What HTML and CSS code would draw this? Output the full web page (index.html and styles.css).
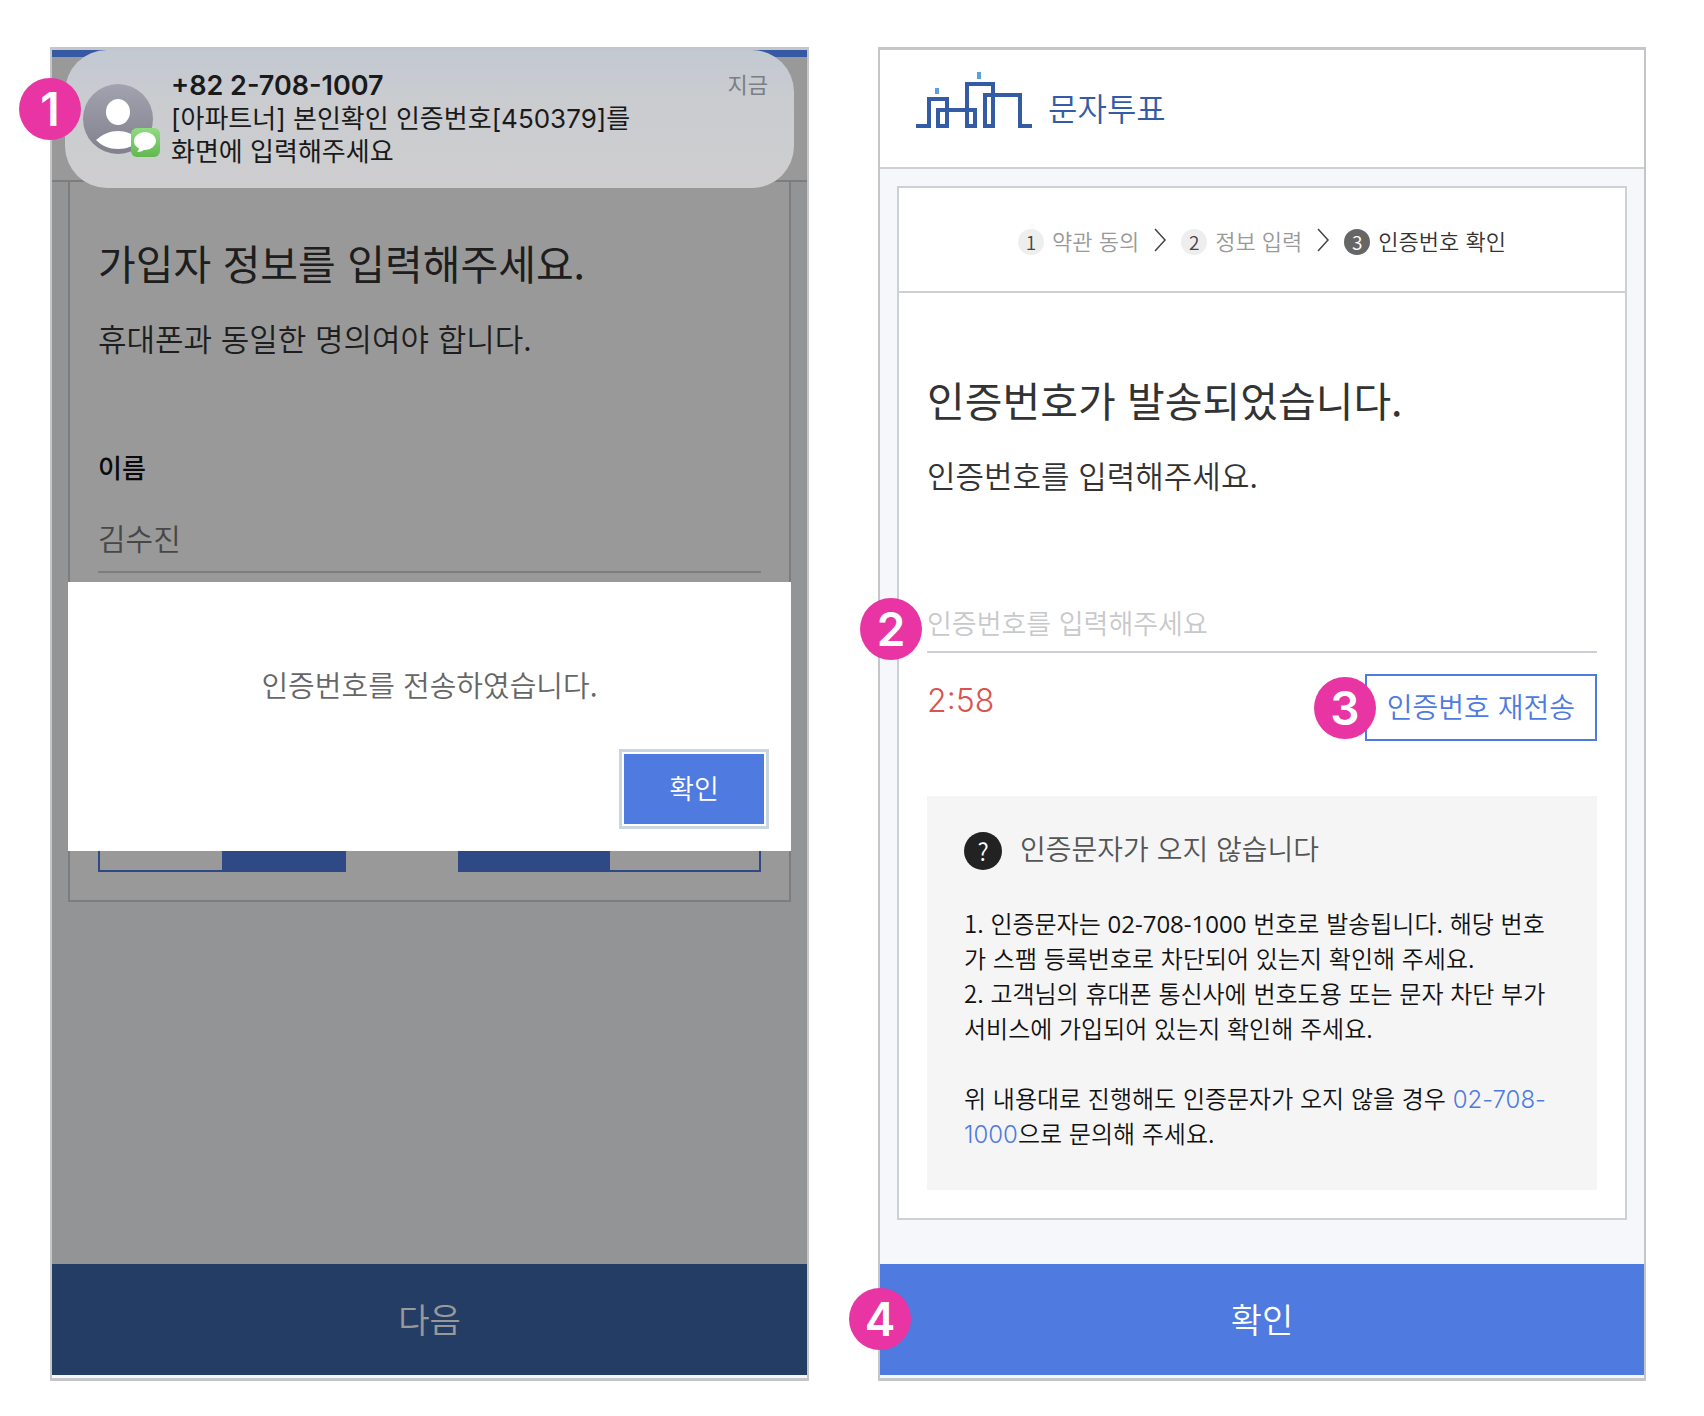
FILE: index.html
```html
<!DOCTYPE html>
<html lang="ko">

<head>
    <meta charset="utf-8">
    <meta name="viewport" content="width=device-width, initial-scale=1">
    <title>문자투표</title>
    <link rel="stylesheet" href="styles.css">
</head>

<body>
    <div class="guide">
        <section class="phone">
            <div class="status-bar"></div>
            <div class="header header-tall"></div>
            <div class="main main-info">
                <div class="card card-info">
                    <h1 class="title">가입자 정보를 입력해주세요.</h1>
                    <p class="subtitle">휴대폰과 동일한 명의여야 합니다.</p>
                    <label class="label" for="name">이름</label>
                    <input class="field field-name" type="text" id="name" value="김수진">
                    <div class="toggles">
                        <div class="toggle toggle-left"><i></i><i class="on"></i></div>
                        <div class="toggle toggle-right"><i class="on"></i><i></i></div>
                    </div>
                </div>
            </div>
            <button class="footer-button next" type="button">다음</button>

            <div class="overlay">
                <div class="modal" role="dialog">
                    <p class="modal-text">인증번호를 전송하였습니다.</p>
                    <button class="modal-button" type="button">확인</button>
                </div>
            </div>

            <div class="notification">
                <div class="avatar">
                    <svg viewBox="0 0 80 76" width="80" height="76">
                        <defs>
                            <linearGradient id="person" x1="0" y1="0" x2="0" y2="1">
                                <stop offset="0" stop-color="#a2a3b0" />
                                <stop offset="1" stop-color="#80818b" />
                            </linearGradient>
                            <linearGradient id="bubble" x1="0" y1="0" x2="0" y2="1">
                                <stop offset="0" stop-color="#8fdb82" />
                                <stop offset="1" stop-color="#62b850" />
                            </linearGradient>
                        </defs>
                        <circle cx="35" cy="35" r="35" fill="url(#person)" />
                        <ellipse cx="35" cy="28" rx="12" ry="13" fill="#fff" />
                        <path d="M13 56C20 50 27 47 35 47s15 3 22 9c-6 6-13 9-22 9s-16-3-22-9z" fill="#fff" />
                        <rect x="48" y="44" width="29" height="29" rx="6" fill="url(#bubble)" />
                        <ellipse cx="62" cy="57" rx="11" ry="9" fill="#fff" />
                        <path d="M56 63c0 3-1 4-2 5 4 0 6-1 8-3z" fill="#fff" />
                    </svg>
                </div>
                <div class="message">
                    <div class="message-top">
                        <strong>+82 2-708-1007</strong>
                        <span class="time">지금</span>
                    </div>
                    <p>[아파트너] 본인확인 인증번호[450379]를<br>화면에 입력해주세요</p>
                </div>
            </div>
            <span class="badge badge-1">1</span>
        </section>

        <section class="phone">
            <div class="header">
                <svg class="logo" viewBox="0 0 118 58" width="118" height="58">
                    <g fill="none" stroke="#345ca6" stroke-width="4">
                        <path d="M1 54H14V27H32V54H23V38H60V54H52V12H78V54H70V23H105V54H117" />
                    </g>
                    <path d="M20 16h4v6h-4zM62 0h4v7h-4z" fill="#5ba0dc" />
                </svg>
                <span class="brand">문자투표</span>
            </div>
            <div class="main">
                <div class="card">
                    <ol class="steps">
                        <li><span class="num">1</span>약관 동의</li>
                        <li class="arrow"><svg viewBox="0 0 14 24" width="14" height="24"><path d="M2 1l10 11L2 23" /></svg></li>
                        <li><span class="num">2</span>정보 입력</li>
                        <li class="arrow"><svg viewBox="0 0 14 24" width="14" height="24"><path d="M2 1l10 11L2 23" /></svg></li>
                        <li class="current"><span class="num">3</span>인증번호 확인</li>
                    </ol>
                    <div class="content">
                        <h1 class="title">인증번호가 발송되었습니다.</h1>
                        <p class="subtitle">인증번호를 입력해주세요.</p>
                        <div class="code">
                            <input class="field" type="text" aria-label="인증번호" placeholder="인증번호를 입력해주세요">
                            <span class="badge badge-2">2</span>
                        </div>
                        <div class="resend-row">
                            <span class="timer">2:58</span>
                            <div class="resend-box">
                                <button class="resend" type="button">인증번호 재전송</button>
                                <span class="badge badge-3">3</span>
                            </div>
                        </div>
                        <div class="help">
                            <h2 class="help-title"><span class="question">?</span>인증문자가 오지 않습니다</h2>
                            <p>1. 인증문자는 <span class="tel">02-708-1000</span> 번호로 발송됩니다. 해당 번호<br>가 스팸 등록번호로 차단되어 있는지 확인해 주세요.</p>
                            <p>2. 고객님의 휴대폰 통신사에 번호도용 또는 문자 차단 부가<br>서비스에 가입되어 있는지 확인해 주세요.</p>
                            <p class="contact">위 내용대로 진행해도 인증문자가 오지 않을 경우 <a href="tel:02-708-1000">02-708-<br>1000</a>으로 문의해 주세요.</p>
                        </div>
                    </div>
                </div>
            </div>
            <div class="footer">
                <button class="footer-button" type="button">확인</button>
                <span class="badge badge-4">4</span>
            </div>
        </section>
    </div>
</body>

</html>
```
FILE: styles.css
```css
* {
    box-sizing: border-box;
}

body {
    margin: 0;
    background: #fff;
    font-family: "Noto Sans CJK KR", sans-serif;
    font-weight: 350;
    color: #333;
}

h1,
h2,
p,
ol {
    margin: 0;
    padding: 0;
    font-weight: inherit;
}

button,
input {
    font: inherit;
    border: none;
    border-radius: 0;
    padding: 0;
}

.guide {
    display: grid;
    grid-template-columns: 759fr 768fr;
    gap: 69px;
    padding: 47px 58px 34px 50px;
}

.phone {
    position: relative;
    display: flex;
    flex-direction: column;
    border: solid #c4c6c9;
    border-width: 3px 2px;
    padding-bottom: 3px;
    background: #f5f7fb;
}

.header {
    display: flex;
    align-items: center;
    height: 119px;
    padding: 0 35px 4px;
    border-bottom: 2px solid #cdd0d4;
    background: #fff;
}

.header-tall {
    height: 132px;
}

.brand {
    margin-left: 15px;
    font-size: 32px;
    line-height: 40px;
    color: #345ca6;
}

.logo {
    margin-bottom: 12px;
}

.main {
    flex: 1;
    padding: 17px 17px 44px;
}

.card {
    border: 2px solid #cdd0d4;
    background: #fff;
}

.content {
    padding: 82px 28px 28px;
}

.title {
    font-size: 41px;
    line-height: 48px;
    font-weight: 400;
}

.subtitle {
    margin-top: 32px;
    font-size: 31px;
    line-height: 40px;
}

.field {
    display: block;
    width: 100%;
    height: 60px;
    border-bottom: 2px solid #cdd0d4;
    background: none;
    font-size: 27px;
    color: #777;
}

.field::placeholder {
    color: #c8c9ca;
    opacity: 1;
}

/* steps */
.steps {
    display: flex;
    justify-content: center;
    align-items: center;
    gap: 14px;
    height: 105px;
    border-bottom: 2px solid #cdd0d4;
    list-style: none;
    font-size: 22px;
    line-height: 32px;
    color: #999;
}

.steps li {
    display: flex;
    align-items: center;
    gap: 8px;
}

.num {
    width: 26px;
    height: 26px;
    margin-top: 4px;
    border-radius: 50%;
    background: #eee;
    color: #444;
    font-size: 19px;
    line-height: 26px;
    text-align: center;
}

.arrow path {
    fill: none;
    stroke: #444;
    stroke-width: 1.5;
}

.steps .current {
    color: #333;
}

.current .num {
    background: #666;
    color: #fff;
}

/* verification code */
.code {
    position: relative;
    margin-top: 98px;
}

.resend-row {
    display: flex;
    justify-content: space-between;
    margin-top: 21px;
}

.timer {
    font-family: Inter, sans-serif;
    font-size: 32px;
    line-height: 54px;
    color: #d9534f;
}

.resend-box {
    position: relative;
}

.resend {
    height: 67px;
    padding: 0 20px 4px;
    border: 2px solid #4f7adf;
    background: #fff;
    color: #4f7adf;
    font-size: 28px;
}

.help {
    margin-top: 55px;
    padding: 30px 37px 40px;
    background: #f5f5f5;
    color: #111;
    font-size: 24px;
    line-height: 35px;
}

.help-title {
    display: flex;
    align-items: center;
    gap: 18px;
    margin-bottom: 35px;
    font-size: 28px;
    line-height: 40px;
    color: #555;
}

.question {
    width: 38px;
    height: 38px;
    margin-top: 6px;
    border-radius: 50%;
    background: #222;
    color: #fff;
    font-size: 24px;
    line-height: 38px;
    text-align: center;
}

.tel {
    font-family: "Open Sans", sans-serif;
    font-weight: 400;
    line-height: 1;
}

.contact {
    margin-top: 35px;
}

.help a {
    font-family: Inter, sans-serif;
    line-height: 1;
    color: #4f7adf;
    text-decoration: none;
}

.footer {
    position: relative;
}

.footer-button {
    display: block;
    width: 100%;
    height: 111px;
    padding-bottom: 2px;
    background: #4f7adf;
    color: #fff;
    font-size: 34px;
}

/* left phone */
.status-bar {
    position: absolute;
    top: 0;
    left: 0;
    right: 0;
    height: 7px;
    background: #3659a4;
    z-index: 2;
}

.main-info {
    padding: 0 16px 44px;
}

.card-info {
    padding: 56px 28px 28px;
    border-top: none;
}

.label {
    display: block;
    margin: 93px 0 30px;
    font-size: 26px;
    line-height: 32px;
    font-weight: 500;
    color: #111;
}

.field-name {
    padding-bottom: 10px;
    font-size: 30px;
}

.toggles {
    display: flex;
    justify-content: space-between;
    gap: 112px;
    margin-top: 235px;
}

.toggle {
    display: flex;
    height: 64px;
    border: 2px solid #4f7adf;
}

.toggle i {
    flex: 1;
}

.toggle .on {
    background: #4f7adf;
}

.toggle-left {
    flex: 248;
}

.toggle-right {
    flex: 303;
}

.next {
    background: #3c66a7;
}

.overlay {
    position: absolute;
    top: 7px;
    left: 0;
    right: 0;
    bottom: 3px;
    display: flex;
    align-items: center;
    padding: 0 16px;
    background: rgba(0, 0, 0, 0.4);
}

.modal {
    width: 100%;
    padding: 82px 27px 27px;
    background: #fff;
    text-align: right;
}

.modal-text {
    margin-bottom: 50px;
    font-size: 29px;
    line-height: 40px;
    text-align: center;
    color: #666;
}

.modal-button {
    display: inline-block;
    vertical-align: top;
    width: 140px;
    height: 70px;
    padding-bottom: 2px;
    background: #4f7adf;
    color: #fff;
    font-size: 27px;
    box-shadow: 0 0 0 2px #fff, 0 0 0 5px #c8d6e2;
}

.notification {
    position: absolute;
    z-index: 3;
    top: 0;
    left: 13px;
    right: 13px;
    display: flex;
    gap: 8px;
    height: 138px;
    padding: 19px 26px 0 18px;
    border-radius: 42px;
    background: linear-gradient(#c3c9d2, #cacccf 40%, #cececf);
    color: #1a1a1a;
}

.avatar {
    padding-top: 15px;
}

.message {
    flex: 1;
    font-family: Inter, "Noto Sans CJK KR", sans-serif;
    font-size: 26px;
    line-height: 33px;
    font-weight: 400;
}

.message-top {
    display: flex;
    justify-content: space-between;
}

.message strong {
    font-size: 27px;
    font-weight: 600;
}

.time {
    font-size: 22px;
    color: #7b7e82;
}

/* number markers */
.badge {
    position: absolute;
    z-index: 4;
    width: 62px;
    height: 62px;
    border-radius: 50%;
    background: #e935a3;
    color: #fff;
    font-family: Inter, sans-serif;
    font-size: 46px;
    font-weight: 600;
    line-height: 62px;
    text-align: center;
}

.badge-1 {
    top: 28px;
    left: -33px;
}

.badge-2 {
    top: 5px;
    left: -67px;
}

.badge-3 {
    top: 3px;
    left: -51px;
}

.badge-4 {
    top: 24px;
    left: -31px;
}
```
